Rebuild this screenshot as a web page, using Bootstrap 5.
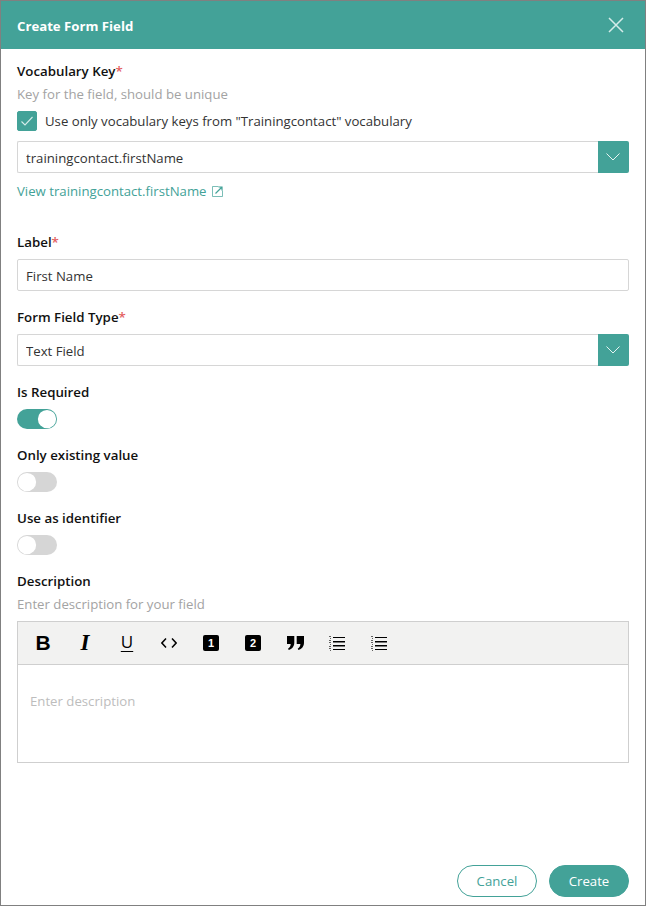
<!DOCTYPE html>
<html lang="en">
<head>
  <meta charset="UTF-8" />
  <meta name="viewport" content="width=device-width, initial-scale=1.0" />
  <title>Create Form Field</title>
  <link href="https://cdn.jsdelivr.net/npm/bootstrap@5.3.0/dist/css/bootstrap.min.css" rel="stylesheet" />
  <style>
    html, body { height: 100%; margin: 0; }
    body { font-family: "Open Sans", "Noto Sans", sans-serif; font-size: 13.2px; color: #333; background: #fff; }

    .field-dialog { height: 906px; border: 1px solid #808080; border-radius: 0; display: flex; flex-direction: column; }
    .field-head { height: 48px; background: #43a298; padding: 0 16px; flex-shrink: 0; }
    .field-head h1 { font-size: 13.2px; font-weight: 700; color: #fff; margin: 0; padding-top: 3px; }
    .head-close { background: none; border: 0; padding: 0; width: 16px; height: 16px; line-height: 0; margin-right: 5px; }

    .field-body { padding: 12px 16px 0; flex-grow: 1; }
    .fld-label { display: block; font-size: 13.3px; font-weight: 600; color: #111; line-height: 20px; margin: 0; }
    .req { color: #e35d5d; }
    .fld-hint { color: #a3a3a3; line-height: 20px; margin-top: 3px; }

    .vocab-check { display: flex; align-items: center; gap: 8px; margin-top: 7px; line-height: 20px; padding: 0; min-height: 20px; margin-bottom: 0; }
    .vocab-check .form-check-input { width: 20px; height: 20px; margin: 0; float: none; border-radius: 2px; background-color: #43a298; border-color: #43a298; }
    .vocab-check .form-check-input:checked { background-size: 20px; background-image: url("data:image/svg+xml,%3csvg xmlns='http://www.w3.org/2000/svg' viewBox='0 0 20 20'%3e%3cpath fill='none' stroke='%23d5ecea' stroke-width='1.1' d='M4.500 10.500l3.500 3.500 7.500-8'/%3e%3c/svg%3e"); }

    .fld-input.form-control { height: 32px; font-size: 13.2px; color: #333; border: 1px solid #d6d6d6; border-radius: 2px; padding: 1px 8px 0; }
    .caret-wrap { margin-top: 10px; }
    .fld-caret { width: 32px; height: 32px; background: #43a298; border: 0; border-radius: 0 2px 2px 0; padding: 0; line-height: 0; }
    .caret-wrap .fld-input.form-control { border-right: 0; }

    .view-link { color: #43a298; text-decoration: none; line-height: 20px; display: flex; width: fit-content; align-items: center; gap: 5px; margin-top: 8px; }

    .label-two { margin-top: 31px; }
    .label-gap { margin-top: 16px; }
    .field-next { margin-top: 7px; }

    .toggle-row.form-switch { padding: 0; min-height: 20px; margin: 7px 0 0; line-height: 0; }
    .toggle-row .form-check-input { width: 40px; height: 20px; margin: 0; float: none; background-color: #d6d6d6; border: 0; background-image: url("data:image/svg+xml,%3csvg xmlns='http://www.w3.org/2000/svg' viewBox='-4 -4 8 8'%3e%3ccircle r='3.65' fill='%23fff'/%3e%3c/svg%3e"); }
    .toggle-row .form-check-input:checked { background-color: #43a298; }

    .editor-box { border: 1px solid #cfcfcf; margin-top: 7px; }
    .editor-bar { height: 43px; background: #f2f2f1; border-bottom: 1px solid #cfcfcf; padding-left: 4px; }
    .bar-btn { width: 42px; height: 42px; display: flex; align-items: center; justify-content: center; color: #000; background: none; border: 0; padding: 0; font-family: "Liberation Sans", sans-serif; }
    .bar-b { font-size: 21px; font-weight: 700; }
    .bar-i { font-size: 23px; font-weight: 700; font-style: italic; font-family: "Liberation Serif", serif; }
    .bar-u { font-size: 17px; font-family: "Open Sans", sans-serif; text-decoration: underline; text-decoration-thickness: 1px; text-underline-offset: 3px; padding-bottom: 2px; }
    .num-chip { width: 16px; height: 16px; background: #000; color: #fff; border-radius: 2px; font-size: 11px; font-weight: 700; line-height: 16px; text-align: center; display: block; }
    .editor-text { height: 97px; padding: 26px 12px 0; color: #bdbdbd; line-height: 20px; }

    .field-foot { padding: 0 16px 8px; gap: 12px; flex-shrink: 0; }
    .foot-btn.btn { width: 80px; height: 32px; border-radius: 16px; font-size: 13.2px; padding: 0; line-height: 30px; border: 1px solid #43a298; }
    .foot-cancel.btn { background: #fff; color: #43a298; }
    .foot-create.btn { background: #43a298; color: #fff; }
  </style>
</head>
<body>
  <div class="field-dialog">
    <div class="field-head d-flex align-items-center justify-content-between">
      <h1>Create Form Field</h1>
      <button class="head-close" type="button" aria-label="Close">
        <svg width="16" height="16" viewBox="0 0 16 16" fill="none" stroke="#d5ecea" stroke-width="1.5"><path d="M1 1l14 14M15 1L1 15" /></svg>
      </button>
    </div>

    <div class="field-body">
      <label class="fld-label">Vocabulary Key<span class="req">*</span></label>
      <div class="fld-hint">Key for the field, should be unique</div>
      <label class="vocab-check form-check">
        <input class="form-check-input" type="checkbox" checked />
        <span>Use only vocabulary keys from "Trainingcontact" vocabulary</span>
      </label>
      <div class="input-group caret-wrap flex-nowrap">
        <input class="form-control fld-input" type="text" value="trainingcontact.firstName" />
        <button class="fld-caret" type="button" aria-label="Open">
          <svg width="14" height="8" viewBox="0 0 14 8" fill="none" stroke="#e6f4f2" stroke-width="1"><path d="M.5.5L7 7 13.500.5" /></svg>
        </button>
      </div>
      <a class="view-link" href="#">View trainingcontact.firstName
        <svg width="11" height="11" viewBox="0 0 11 11" fill="none" stroke="#43a298"><path stroke-opacity=".7" d="M6.500.5h-6v10h10v-6" /><path stroke-width="1.200" d="M3.500 7.500l6-6M6.500 1h3.500v3.500" /></svg>
      </a>

      <label class="fld-label label-two">Label<span class="req">*</span></label>
      <input class="form-control fld-input field-next" type="text" value="First Name" />

      <label class="fld-label label-gap">Form Field Type<span class="req">*</span></label>
      <div class="input-group caret-wrap flex-nowrap field-next">
        <input class="form-control fld-input" type="text" value="Text Field" />
        <button class="fld-caret" type="button" aria-label="Open">
          <svg width="14" height="8" viewBox="0 0 14 8" fill="none" stroke="#e6f4f2" stroke-width="1"><path d="M.5.5L7 7 13.500.5" /></svg>
        </button>
      </div>

      <label class="fld-label label-gap">Is Required</label>
      <div class="form-check form-switch toggle-row"><input class="form-check-input" type="checkbox" role="switch" checked /></div>

      <label class="fld-label label-gap">Only existing value</label>
      <div class="form-check form-switch toggle-row"><input class="form-check-input" type="checkbox" role="switch" /></div>

      <label class="fld-label label-gap">Use as identifier</label>
      <div class="form-check form-switch toggle-row"><input class="form-check-input" type="checkbox" role="switch" /></div>

      <label class="fld-label label-gap">Description</label>
      <div class="fld-hint">Enter description for your field</div>
      <div class="editor-box">
        <div class="editor-bar d-flex align-items-center">
          <button class="bar-btn bar-b" type="button">B</button>
          <button class="bar-btn bar-i" type="button">I</button>
          <button class="bar-btn bar-u" type="button">U</button>
          <button class="bar-btn" type="button" aria-label="Code">
            <svg width="16" height="10" viewBox="0 0 16 10" fill="none" stroke="#000" stroke-width="1.500"><path d="M5 .5L.9 5 5 9.500M11 .5L15.100 5 11 9.500" /></svg>
          </button>
          <button class="bar-btn" type="button"><span class="num-chip">1</span></button>
          <button class="bar-btn" type="button"><span class="num-chip">2</span></button>
          <button class="bar-btn" type="button" aria-label="Quote">
            <svg width="17" height="14" viewBox="0 0 17 14" fill="#000"><path d="M0 0h7.300v6.500C7.300 10.500 5 13 1.800 14L1 12.700C2.800 11.700 3.600 10 3.700 8H0zM9.700 0H17v6.500c0 4-2.300 6.500-5.500 7.500l-.8-1.300c1.800-1 2.600-2.700 2.700-4.700H9.700z" /></svg>
          </button>
          <button class="bar-btn" type="button" aria-label="Ordered list">
            <svg width="16" height="15" viewBox="0 0 16 15" fill="#000"><path d="M4 1h12v1H4zM4 5h12v1.400H4zM4 9h12v1.400H4zM4 13h12v1H4z" /><path fill-opacity=".6" d="M0 0h2v1H0zM1 2h1v1H1zM0 4h2v1H0zM0 6h2v1H0zM1 8h1v1H1zM0 10h2v1H0zM0 12h2v1H0zM1 14h1v1H1z" /></svg>
          </button>
          <button class="bar-btn" type="button" aria-label="Bullet list">
            <svg width="16" height="15" viewBox="0 0 16 15" fill="#000"><path d="M4 1h12v1H4zM4 5h12v1.400H4zM4 9h12v1.400H4zM4 13h12v1H4z" /><path fill-opacity=".6" d="M0 0h2v1H0zM1 2h1v1H1zM0 4h2v1H0zM0 6h2v1H0zM1 8h1v1H1zM0 10h2v1H0zM0 12h2v1H0zM1 14h1v1H1z" /></svg>
          </button>
        </div>
        <div class="editor-text">Enter description</div>
      </div>
    </div>

    <div class="field-foot d-flex justify-content-end">
      <button class="btn foot-btn foot-cancel" type="button">Cancel</button>
      <button class="btn foot-btn foot-create" type="button">Create</button>
    </div>
  </div>
  <script src="https://cdn.jsdelivr.net/npm/bootstrap@5.3.0/dist/js/bootstrap.bundle.min.js"></script>
</body>
</html>
